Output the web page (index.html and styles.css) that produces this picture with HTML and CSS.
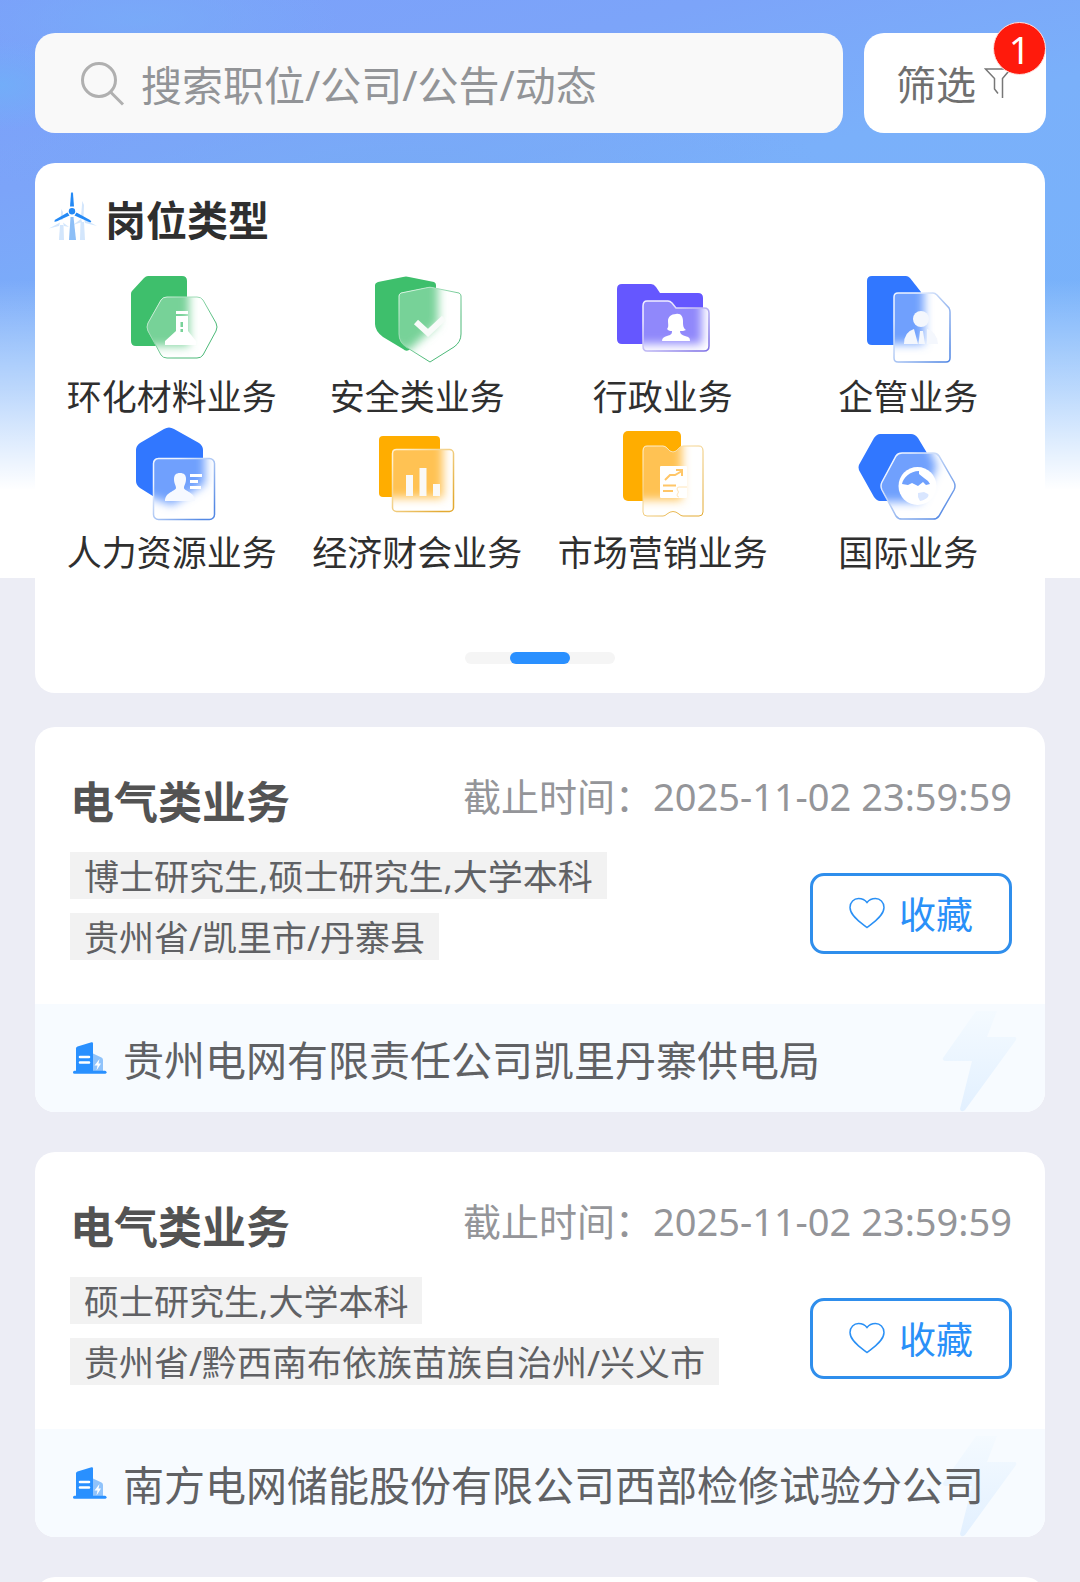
FILE: index.html
```html
<!DOCTYPE html>
<html lang="zh-CN">

<head>
    <meta charset="UTF-8">
    <meta name="viewport" content="width=device-width, initial-scale=1.0">
    <title>岗位类型</title>
    <link rel="stylesheet" href="styles.css">
</head>

<body>
    <!-- shared icons -->
    <svg class="sprite" width="0" height="0" aria-hidden="true">
        <defs>
            <filter id="soft" x="-30%" y="-30%" width="160%" height="160%">
                <feGaussianBlur stdDeviation="5" />
            </filter>
            <linearGradient id="edgeGreen" x1="0" y1="0" x2="1" y2="1">
                <stop offset="0.1" stop-color="#d5f3df" />
                <stop offset="0.7" stop-color="#4cb978" />
            </linearGradient>
            <linearGradient id="edgePurple" x1="0" y1="0" x2="1" y2="1">
                <stop offset="0.2" stop-color="#f1efff" />
                <stop offset="0.9" stop-color="#8274e6" />
            </linearGradient>
            <linearGradient id="edgeBlue" x1="0" y1="0" x2="1" y2="1">
                <stop offset="0.2" stop-color="#eef4ff" />
                <stop offset="0.9" stop-color="#5388e4" />
            </linearGradient>
            <linearGradient id="edgeOrange" x1="0" y1="0" x2="1" y2="1">
                <stop offset="0.1" stop-color="#fff0cf" />
                <stop offset="0.9" stop-color="#e3aa32" />
            </linearGradient>
            <linearGradient id="boltFill" x1="0" y1="0" x2="0" y2="1">
                <stop offset="0" stop-color="#f4faff" />
                <stop offset="1" stop-color="#e2f0ff" />
            </linearGradient>
        </defs>
        <symbol id="heart" viewBox="0 0 36 32">
            <path d="M18 30.500C14 27 1 19.500 1 10.500C1 5 5 1.500 9.500 1.500C13.500 1.500 16.500 3.500 18 5.500C19.500 3.500 22.500 1.500 26.500 1.500C31 1.500 35 5 35 10.500C35 19.500 22 27 18 30.500Z" fill="none" stroke="#2a90f5" stroke-width="1.500" />
        </symbol>
        <symbol id="building" viewBox="0 0 34 32">
            <path d="M20 11.500L28.500 15.500Q30 16.200 30 18V30H20Z" fill="#90c3fb" />
            <path d="M26.500 17L21.500 23.500H24.500L23.500 28.500L28 21.500H25.500Z" fill="#fff" />
            <path d="M3 6.500Q3 5 4.500 4.500L18.500 0.300Q20 0 20 1.500V30H3Z" fill="#2990ff" />
            <path d="M7 15H16M7 20.500H16" stroke="#fff" stroke-width="2.600" stroke-linecap="round" />
            <path d="M1.500 30.300H32" stroke="#2990ff" stroke-width="3" stroke-linecap="round" />
        </symbol>
        <symbol id="bolt" viewBox="0 0 76 101">
            <path d="M34 0H55L45 26H73Q75 26.500 74 29L23 99Q19 102 18 98L30 50H3Q0 49 1 47Z" fill="url(#boltFill)" />
        </symbol>
    </svg>

    <main class="page">
        <form class="search-row">
            <div class="search-box">
                <svg class="search-icon" viewBox="0 0 44 44" aria-hidden="true">
                    <circle cx="18" cy="18" r="16.500" fill="none" stroke="#b0b0b0" stroke-width="3" />
                    <path d="M29.500 30L42 42.500" stroke="#b0b0b0" stroke-width="3" />
                </svg>
                <input type="text" class="search-input" placeholder="搜索职位/公司/公告/动态" aria-label="搜索">
            </div>
            <button type="button" class="filter-btn">
                <span>筛选</span>
                <svg class="filter-icon" viewBox="0 0 28 30" aria-hidden="true">
                    <path d="M18.500 30V10.500L26.500 1H1.500L10.500 10.500V21L14 25.500" fill="none" stroke="#777" stroke-width="1.500" />
                </svg>
                <span class="badge">1</span>
            </button>
        </form>

        <section class="category-card">
            <h2 class="category-title">
                <svg class="wind-icon" viewBox="0 0 48 48" aria-hidden="true">
                    <g fill="#d3e6fc">
                        <path d="M11 33H14.500L15 48H10Z" />
                        <path d="M12.300 17L14 20L13.500 28H11.500Z" />
                        <path d="M11 30.500L0 36.500L10 34Z" />
                        <path d="M14 30.500L20 35L15 34Z" />
                        <path d="M31.500 30H35L36 48H31Z" />
                        <path d="M33.300 9L35 13L34.500 25H32Z" />
                        <path d="M32 27L24 33L33 30Z" />
                        <path d="M35 27L48 34L36 31Z" />
                    </g>
                    <path d="M21.500 25H24.500L27 48H20Z" fill="#8dbff7" />
                    <g fill="#2389f5">
                        <circle cx="23" cy="19.300" r="3.200" />
                        <path d="M21 14.500L22 1.500Q23 -1.500 24 1.500L25 14.500Z" />
                        <path d="M18.500 20.500L20.500 23.500L8 29.300Q3.500 30.500 6.500 27.500Z" />
                        <path d="M27.500 20.500L25.500 23.500L40 30Q44 31 41 28Z" />
                    </g>
                </svg>
                <span>岗位类型</span>
            </h2>

            <nav class="category-grid">
                <a href="#" class="category">
                    <svg class="category-icon" viewBox="0 0 100 100" aria-hidden="true">
                        <clipPath id="c1">
                            <path d="M45 27H75Q79 27 81 30L94 53Q96 57 94 61L81 85Q79 88 75 88H45Q41 88 39 85L26 61Q24 57 26 53L39 30Q41 27 45 27Z" />
                        </clipPath>
                        <path d="M9 24Q9 22 10 21L22 8Q24 6 26 6H60Q65 6 65 11V71Q65 76 60 76H14Q9 76 9 71Z" fill="#3ebf6c" />
                        <g clip-path="url(#c1)">
                            <rect width="100" height="100" fill="#fff" />
                            <rect x="0" y="0" width="67" height="76" fill="#77d298" filter="url(#soft)" />
                        </g>
                        <path d="M45 27H75Q79 27 81 30L94 53Q96 57 94 61L81 85Q79 88 75 88H45Q41 88 39 85L26 61Q24 57 26 53L39 30Q41 27 45 27Z" fill="none" stroke="url(#edgeGreen)" />
                        <path d="M54 41H66V44H54ZM54 46H66V61L74 71V75H43V71L54 61Z" fill="#fff" />
                        <path d="M58.500 52H61V57H58.500ZM58.500 59H61V62H58.500Z" fill="#77d298" />
                    </svg>
                    环化材料业务
                </a>
                <a href="#" class="category">
                    <svg class="category-icon" viewBox="0 0 100 100" aria-hidden="true">
                        <clipPath id="c2">
                            <path d="M34 23L61 17.500Q63 17 65 17.500L92 23Q94 24 94 26V64Q94 72 87 77L63 92L39 77Q32 72 32 64V26Q32 24 34 23Z" />
                        </clipPath>
                        <path d="M11 12L36 7Q39 6 42 7L67 12Q69 13 69 15V54Q69 60 64 65L42 80Q39 82 36 79L16 67Q8 61 8 54V15Q8 13 11 12Z" fill="#3ebf6c" />
                        <g clip-path="url(#c2)">
                            <rect width="100" height="100" fill="#fff" />
                            <path d="M0 0H71V54L40 82L0 60Z" fill="#77d298" filter="url(#soft)" />
                        </g>
                        <path d="M34 23L61 17.500Q63 17 65 17.500L92 23Q94 24 94 26V64Q94 72 87 77L63 92L39 77Q32 72 32 64V26Q32 24 34 23Z" fill="none" stroke="url(#edgeGreen)" />
                        <path d="M49 52L61 63L77 48" fill="none" stroke="#f8fbf9" stroke-width="6" />
                    </svg>
                    安全类业务
                </a>
                <a href="#" class="category">
                    <svg class="category-icon" viewBox="0 0 100 100" aria-hidden="true">
                        <clipPath id="c3">
                            <path d="M34 31H55Q57 31 59 33L63 38H91Q96 38 96 43V76Q96 81 91 81H34Q30 81 30 76V36Q30 31 34 31Z" />
                        </clipPath>
                        <path d="M9 14H38Q41 14 43 17L47 23H85Q90 23 90 28V74H9Q4 74 4 69V19Q4 14 9 14Z" fill="#6557ff" />
                        <g clip-path="url(#c3)">
                            <rect width="100" height="100" fill="#fff" />
                            <rect x="0" y="0" width="89" height="74" fill="#9088fb" filter="url(#soft)" />
                        </g>
                        <path d="M34 31H55Q57 31 59 33L63 38H91Q96 38 96 43V76Q96 81 91 81H34Q30 81 30 76V36Q30 31 34 31Z" fill="none" stroke="url(#edgePurple)" stroke-width="1.500" />
                        <path d="M63 44C68 43 70 47 70 51C70 55 70 58 73 60C71 61 69 61 67 61C67 64 69 65 72 66C76 67 77 68 77 71H49C49 68 51 67 54 66C58 65 59 64 59 61C57 61 56 61 54 59C56 57 55 54 55 51C55 47 58 44 63 44Z" fill="#fff" />
                    </svg>
                    行政业务
                </a>
                <a href="#" class="category">
                    <svg class="category-icon" viewBox="0 0 100 100" aria-hidden="true">
                        <clipPath id="c4">
                            <path d="M40 23H75Q77 23 79 25L91 38Q92 40 92 42V88Q92 92 88 92H40Q36 92 36 88V27Q36 23 40 23Z" />
                        </clipPath>
                        <path d="M14 6H48Q50 6 52 8L63 22V75H14Q9 75 9 70V11Q9 6 14 6Z" fill="#3177ff" />
                        <g clip-path="url(#c4)">
                            <rect width="100" height="100" fill="#fff" />
                            <rect x="0" y="0" width="66" height="74" fill="#6fa0fd" filter="url(#soft)" />
                        </g>
                        <path d="M40 23H75Q77 23 79 25L91 38Q92 40 92 42V88Q92 92 88 92H40Q36 92 36 88V27Q36 23 40 23Z" fill="none" stroke="url(#edgeBlue)" stroke-width="1.500" />
                        <circle cx="63" cy="49" r="8" fill="#f4f7fd" />
                        <path d="M46 74Q46 62 56 59L60 74ZM62 61H65L67 74H60.500ZM69 59Q79 62 80 74H69Z" fill="#f4f7fd" />
                    </svg>
                    企管业务
                </a>
                <a href="#" class="category">
                    <svg class="category-icon" viewBox="0 0 100 100" aria-hidden="true">
                        <clipPath id="c5">
                            <rect x="31" y="32" width="61" height="61" rx="5" />
                        </clipPath>
                        <path d="M42 3Q47 0 52 3L77 17Q81 20 81 24V56Q81 60 77 63L52 77Q47 80 42 77L18 62Q14 59 14 55V24Q14 20 18 17Z" fill="#3177ff" />
                        <g clip-path="url(#c5)">
                            <rect width="100" height="100" fill="#fff" />
                            <path d="M0 0H83V58L50 79L20 68Z" fill="#6fa0fd" filter="url(#soft)" />
                        </g>
                        <rect x="31.500" y="32.500" width="61" height="61" rx="5" fill="none" stroke="url(#edgeBlue)" stroke-width="1.500" />
                        <path d="M58 47C62 47 64 49 64 53C64 58 62 59 62 62C62 65 73 66 73 75H43C43 66 54 65 54 62C54 59 52 58 52 53C52 49 54 47 58 47Z" fill="#f6f9ff" />
                        <path d="M68 49.500H80M68 55.500H76M68 61.500H79" stroke="#fff" stroke-width="3" />
                    </svg>
                    人力资源业务
                </a>
                <a href="#" class="category">
                    <svg class="category-icon" viewBox="0 0 100 100" aria-hidden="true">
                        <clipPath id="c6">
                            <rect x="25" y="23" width="62" height="62" rx="4" />
                        </clipPath>
                        <rect x="12" y="10" width="61" height="61" rx="4" fill="#ffad00" />
                        <g clip-path="url(#c6)">
                            <rect width="100" height="100" fill="#fff" />
                            <rect x="0" y="0" width="76" height="72" fill="#ffc252" filter="url(#soft)" />
                        </g>
                        <rect x="25.500" y="23.500" width="61" height="62" rx="4" fill="none" stroke="url(#edgeOrange)" stroke-width="1.500" />
                        <path d="M39 49H46V70H39ZM52.500 42H59.500V70H52.500ZM66 58H73V70H66Z" fill="#faf9f6" />
                    </svg>
                    经济财会业务
                </a>
                <a href="#" class="category">
                    <svg class="category-icon" viewBox="0 0 100 100" aria-hidden="true">
                        <clipPath id="c7">
                            <path d="M34 20H50Q52 20 54 22Q60 30 66 22Q68 20 70 20H86Q90 20 90 25V86Q90 90 86 90H70Q68 90 66 88Q60 83 54 88Q52 90 50 90H34Q30 90 30 86V25Q30 20 34 20Z" />
                        </clipPath>
                        <rect x="10" y="5" width="58" height="70" rx="5" fill="#ffad00" />
                        <g clip-path="url(#c7)">
                            <rect width="100" height="100" fill="#fff" />
                            <rect x="0" y="0" width="69" height="74" fill="#ffc252" filter="url(#soft)" />
                        </g>
                        <path d="M34 20H50Q52 20 54 22Q60 30 66 22Q68 20 70 20H86Q90 20 90 25V86Q90 90 86 90H70Q68 90 66 88Q60 83 54 88Q52 90 50 90H34Q30 90 30 86V25Q30 20 34 20Z" fill="none" stroke="url(#edgeOrange)" />
                        <rect x="47" y="40" width="27" height="32" rx="1" fill="#fff" />
                        <path d="M52 54L57 49H62L69 45M63 44H69V50M50 59.500H63M50 65H60" fill="none" stroke="#ffc667" stroke-width="2" />
                        <path d="M74 61H66Q64 61 64 63Q67 66 64 69Q64 71 66 71" fill="none" stroke="#ffe5b8" />
                    </svg>
                    市场营销业务
                </a>
                <a href="#" class="category">
                    <svg class="category-icon" viewBox="0 0 100 100" aria-hidden="true">
                        <clipPath id="c8">
                            <path d="M44 27H75Q79 27 81 30L96 56Q98 60 96 64L81 90Q79 93 75 93H44Q40 93 38 90L24 64Q22 60 24 56L38 30Q40 27 44 27Z" />
                        </clipPath>
                        <path d="M22 8H53Q57 8 60 12L75 37Q78 41 75 46L60 71Q57 75 53 75H22Q19 75 16 71L2 46Q-1 41 2 37L16 12Q19 8 22 8Z" fill="#3177ff" />
                        <g clip-path="url(#c8)">
                            <rect width="100" height="100" fill="#fff" />
                            <path d="M0 0H62L79 41L62 76H0Z" fill="#6fa0fd" filter="url(#soft)" />
                        </g>
                        <path d="M44 27H75Q79 27 81 30L96 56Q98 60 96 64L81 90Q79 93 75 93H44Q40 93 38 90L24 64Q22 60 24 56L38 30Q40 27 44 27Z" fill="none" stroke="url(#edgeBlue)" stroke-width="1.500" />
                        <circle cx="59.500" cy="60" r="19" fill="#fff" />
                        <path d="M44 58C45 52 52 45 61 45V48L66 52L70 55L72 58L68 59L65 56L60 60L54 57L50 59Z" fill="#6fa0fd" />
                        <path d="M60 67L66 66L70 68C72 70 68 74 62 75L60 71Z" fill="#d9e6ff" />
                    </svg>
                    国际业务
                </a>
            </nav>

            <div class="pager"><span class="pager-thumb"></span></div>
        </section>

        <section class="job-list">
            <article class="job-card">
                <div class="job-body">
                    <div class="job-head">
                        <h3 class="job-title">电气类业务</h3>
                        <span class="job-deadline">截止时间：2025-11-02 23:59:59</span>
                    </div>
                    <div class="job-info">
                        <div class="job-tags">
                            <span class="tag">博士研究生,硕士研究生,大学本科</span>
                            <span class="tag">贵州省/凯里市/丹寨县</span>
                        </div>
                        <button type="button" class="fav-btn">
                            <svg class="heart-icon" aria-hidden="true"><use href="#heart" /></svg>
                            收藏
                        </button>
                    </div>
                </div>
                <div class="job-company">
                    <svg class="bolt-icon" aria-hidden="true"><use href="#bolt" /></svg>
                    <svg class="building-icon" aria-hidden="true"><use href="#building" /></svg>
                    <span class="company-name">贵州电网有限责任公司凯里丹寨供电局</span>
                </div>
            </article>

            <article class="job-card">
                <div class="job-body">
                    <div class="job-head">
                        <h3 class="job-title">电气类业务</h3>
                        <span class="job-deadline">截止时间：2025-11-02 23:59:59</span>
                    </div>
                    <div class="job-info">
                        <div class="job-tags">
                            <span class="tag">硕士研究生,大学本科</span>
                            <span class="tag">贵州省/黔西南布依族苗族自治州/兴义市</span>
                        </div>
                        <button type="button" class="fav-btn">
                            <svg class="heart-icon" aria-hidden="true"><use href="#heart" /></svg>
                            收藏
                        </button>
                    </div>
                </div>
                <div class="job-company">
                    <svg class="bolt-icon" aria-hidden="true"><use href="#bolt" /></svg>
                    <svg class="building-icon" aria-hidden="true"><use href="#building" /></svg>
                    <span class="company-name">南方电网储能股份有限公司西部检修试验分公司</span>
                </div>
            </article>

            <article class="job-card job-card-empty"></article>
        </section>
    </main>
</body>

</html>
```
FILE: styles.css
```css
* {
    box-sizing: border-box;
}

body {
    margin: 0;
    background-color: #ecedf5;
    font-family: "Noto Sans", "Noto Sans CJK SC", sans-serif;
}

button,
input {
    font-family: inherit;
    border: none;
}

.sprite {
    position: absolute;
}

.page {
    height: 100vh;
    overflow: hidden;
    padding: 33px 34px 0 35px;
    background-image:
        linear-gradient(to bottom, rgba(255, 255, 255, 0) 280px, rgba(255, 255, 255, 0.5) 390px, #fff 490px),
        radial-gradient(ellipse 90px 45px at 0 85px, rgba(112, 176, 248, 0.8), rgba(112, 176, 248, 0)),
        radial-gradient(ellipse 200px 60px at 140px 20px, rgba(120, 172, 248, 0.8), rgba(120, 172, 248, 0)),
        radial-gradient(ellipse 420px 60px at 400px 160px, rgba(120, 170, 246, 0.9), rgba(120, 170, 246, 0)),
        linear-gradient(165deg, #7ba0fa 0, #7ca4f9 22%, #7ab0fa 42%, #76b4fb 100%);
    background-size: 100% 578px;
    background-repeat: no-repeat;
}

/* search */
.search-row {
    display: flex;
    gap: 21px;
    height: 100px;
}

.search-box {
    flex: 1;
    display: flex;
    align-items: center;
    gap: 16px;
    padding: 2px 46px 0;
    border-radius: 20px;
    background-color: #f9f9f9;
}

.search-icon {
    width: 44px;
    height: 44px;
}

.search-input {
    flex: 1;
    min-width: 0;
    height: 64px;
    padding: 2px 0 0;
    background: none;
    font-size: 41px;
    outline: none;
}

.search-input::placeholder {
    color: #929497;
    opacity: 1;
}

.filter-btn {
    position: relative;
    display: flex;
    align-items: center;
    gap: 8px;
    padding: 0 34px 0 32px;
    border-radius: 20px;
    background-color: #fff;
    color: #6f6f6f;
    font-size: 40px;
}

.filter-icon {
    width: 28px;
    height: 30px;
}

.badge {
    position: absolute;
    top: -11px;
    right: 0;
    width: 53px;
    height: 53px;
    border: 1px solid #ffe3e0;
    border-radius: 50%;
    background-color: #ff1a0c;
    color: #fff;
    font-size: 38px;
    line-height: 52px;
    text-align: center;
}

/* categories */
.category-card {
    margin: 30px 1px 0 0;
    padding: 27px 14px 29px;
    border-radius: 20px;
    background-color: #fff;
}

.category-title {
    display: flex;
    align-items: center;
    gap: 8px;
    height: 60px;
    margin: 0;
    color: #2f2f2f;
    font-size: 41px;
    font-weight: 700;
    line-height: 64px;
}

.wind-icon {
    width: 48px;
    height: 48px;
    margin-bottom: 8px;
}

.category-grid {
    display: grid;
    grid-template-columns: repeat(4, 1fr);
    row-gap: 2px;
    margin-top: 20px;
}

.category {
    display: flex;
    flex-direction: column;
    align-items: center;
    color: #2f2f2f;
    font-size: 35px;
    line-height: 54px;
    text-decoration: none;
    white-space: nowrap;
}

.category-icon {
    width: 100px;
    height: 100px;
}

.pager {
    display: flex;
    justify-content: center;
    width: 150px;
    height: 12px;
    margin: 72px auto 0;
    border-radius: 6px;
    background-color: #f5f5f5;
}

.pager-thumb {
    width: 60px;
    border-radius: 6px;
    background-color: #2a90ff;
}

/* jobs */
.job-list {
    display: flex;
    flex-direction: column;
    gap: 40px;
    margin: 34px 1px 0 0;
}

.job-card {
    border-radius: 20px;
    background-color: #fff;
    overflow: hidden;
}

.job-card-empty {
    height: 120px;
}

.job-body {
    padding: 40px 33px 44px 35px;
}

.job-head {
    display: flex;
    justify-content: space-between;
    height: 70px;
}

.job-title {
    margin: 0;
    color: #535353;
    font-size: 44px;
    line-height: 70px;
}

.job-deadline {
    color: #949599;
    font-size: 38px;
    line-height: 58px;
}

.job-info {
    display: flex;
    justify-content: space-between;
    align-items: center;
    margin-top: 15px;
}

.job-tags {
    display: flex;
    flex-direction: column;
    align-items: flex-start;
    gap: 14px;
}

.tag {
    padding: 2px 14px 0;
    background-color: #f2f2f2;
    color: #606164;
    font-size: 35px;
    line-height: 45px;
}

.fav-btn {
    display: flex;
    align-items: center;
    justify-content: center;
    gap: 14px;
    width: 202px;
    height: 81px;
    margin-top: 14px;
    border: 3px solid #2f8eec;
    border-radius: 14px;
    background-color: #fff;
    color: #2a90f8;
    font-size: 37px;
}

.heart-icon {
    width: 36px;
    height: 32px;
}

.job-company {
    position: relative;
    display: flex;
    align-items: center;
    gap: 16px;
    height: 108px;
    padding: 0 38px;
    background-color: #f7fbff;
}

.building-icon {
    width: 34px;
    height: 32px;
}

.company-name {
    position: relative;
    padding-top: 4px;
    color: #606164;
    font-size: 41px;
    line-height: 60px;
    white-space: nowrap;
}

/* watermark behind the company name */
.bolt-icon {
    position: absolute;
    right: 27px;
    bottom: 0;
    width: 76px;
    height: 101px;
}
```
